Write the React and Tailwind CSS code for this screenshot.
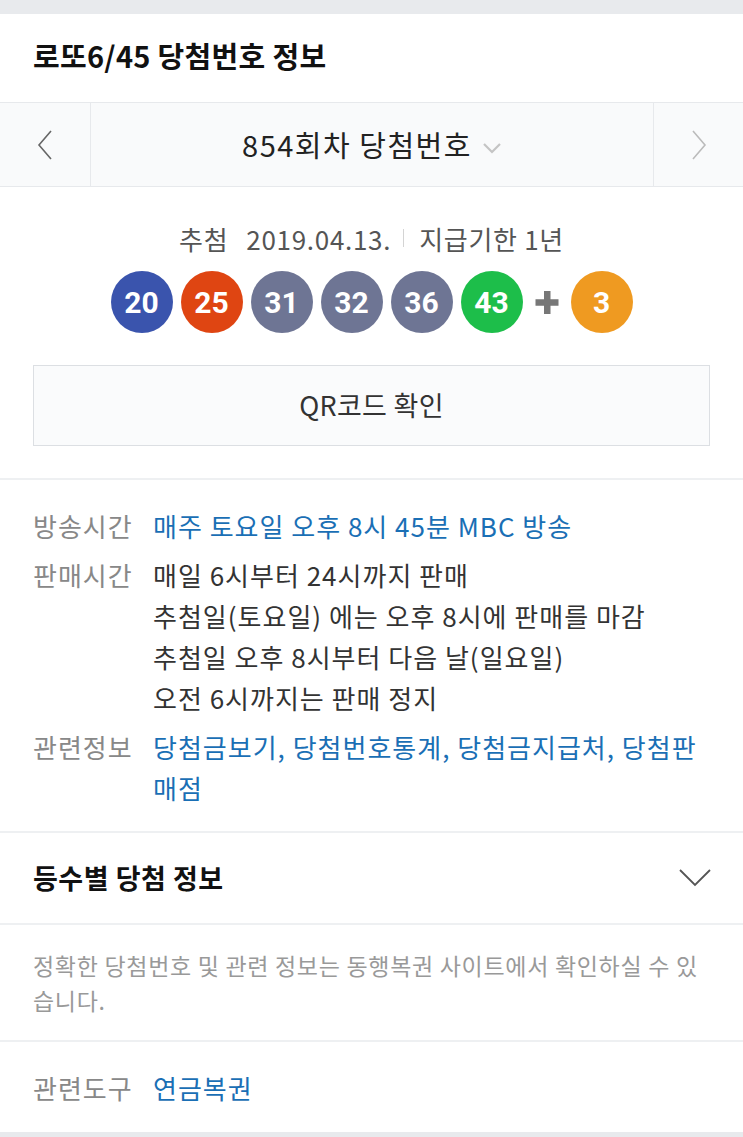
import React from "react";

const F = { fontFamily: '"Noto Sans CJK KR", "Noto Sans", sans-serif' };

function Ball({ n, color }) {
  return (
    <div
      className={`flex h-[62px] w-[62px] items-center justify-center rounded-full ${color} text-[30px] font-bold text-white`}
      style={{ fontFamily: 'Roboto, "Liberation Sans", sans-serif' }}
    >
      {n}
    </div>
  );
}

export default function App() {
  return (
    <div className="min-h-[1137px] w-[743px] bg-[#e8eaed]" style={F}>
      <div className="h-[14px]" />
      <div className="bg-white">
        {/* Title */}
        <div className="flex h-[88px] items-center px-[33px] pb-[4px]">
          <h1 className="text-[29px] font-bold tracking-[0.3px] text-[#111]">로또6/45 당첨번호 정보</h1>
        </div>
        {/* Nav */}
        <div className="flex h-[85px] border-y border-[#e7e9ec] bg-[#f9fafb]">
          <div className="flex w-[91px] items-center justify-center border-r border-[#e7e9ec]">
            <svg width="16" height="30" viewBox="0 0 16 30">
              <polyline points="14,1 2,15 14,29" fill="none" stroke="#666" strokeWidth="1.6" />
            </svg>
          </div>
          <div className="flex flex-1 items-center justify-center gap-[10px]">
            <span className="text-[29px] tracking-[1.5px] text-[#222]">854회차 당첨번호</span>
            <svg width="20" height="12" viewBox="0 0 20 12" className="mt-[6px]">
              <polyline points="2,2 10,10 18,2" fill="none" stroke="#c4c4c4" strokeWidth="2.2" />
            </svg>
          </div>
          <div className="flex w-[90px] items-center justify-center border-l border-[#e7e9ec]">
            <svg width="16" height="30" viewBox="0 0 16 30">
              <polyline points="2,1 14,15 2,29" fill="none" stroke="#bbb" strokeWidth="1.6" />
            </svg>
          </div>
        </div>
        {/* Draw info */}
        <div className="flex flex-col items-center border-b-2 border-[#eef0f2] px-[33px] pb-[32px] pt-[32px]">
          <div className="flex h-[38px] items-center text-[26px] tracking-[0.7px] text-[#555]">
            <span className="mr-[18px]">추첨</span>
            <span>2019.04.13.</span>
            <span className="ml-[12px] mr-[15px] h-[18px] w-px bg-[#d4d4d4]" />
            <span>지급기한 1년</span>
          </div>
          <div className="mt-[14px] flex items-center gap-[8px]">
            <Ball n="20" color="bg-[#3a54ad]" />
            <Ball n="25" color="bg-[#df4512]" />
            <Ball n="31" color="bg-[#6e7594]" />
            <Ball n="32" color="bg-[#6e7594]" />
            <Ball n="36" color="bg-[#6e7594]" />
            <Ball n="43" color="bg-[#1dbe4a]" />
            <svg width="30" height="30" viewBox="0 0 30 30" className="mx-[1px]">
              <rect x="12" y="4" width="6.5" height="23" fill="#777" />
              <rect x="3.5" y="12.25" width="23" height="6.5" fill="#777" />
            </svg>
            <Ball n="3" color="bg-[#ef9a21]" />
          </div>
          <div className="mt-[32px] flex h-[81px] w-full items-center justify-center border border-[#dcdfe3] bg-[#fafbfc] text-[27px] tracking-[0.3px] text-[#333]">
            QR코드 확인
          </div>
        </div>
        {/* Info */}
        <div className="flex flex-col gap-[8px] border-b-2 border-[#eef0f2] px-[33px] pb-[23px] pt-[25px] text-[26px] leading-[41px] tracking-[1px]">
          <div className="flex">
            <div className="w-[120px] shrink-0 text-[#888]">방송시간</div>
            <div className="text-[#1a6fb5]">매주 토요일 오후 8시 45분 MBC 방송</div>
          </div>
          <div className="flex">
            <div className="w-[120px] shrink-0 text-[#888]">판매시간</div>
            <div className="text-[#333]">
              매일 6시부터 24시까지 판매
              <br />
              추첨일(토요일) 에는 오후 8시에 판매를 마감
              <br />
              추첨일 오후 8시부터 다음 날(일요일)
              <br />
              오전 6시까지는 판매 정지
            </div>
          </div>
          <div className="flex">
            <div className="w-[120px] shrink-0 text-[#888]">관련정보</div>
            <div className="text-[#1a6fb5]">
              당첨금보기, 당첨번호통계, 당첨금지급처, 당첨판
              <br />
              매점
            </div>
          </div>
        </div>
        {/* Accordion */}
        <div className="flex h-[92px] items-center justify-between border-b-2 border-[#eef0f2] pl-[33px] pr-[32px]">
          <span className="text-[27px] font-bold tracking-[0.5px] text-[#111]">등수별 당첨 정보</span>
          <svg width="32" height="18" viewBox="0 0 32 18">
            <polyline points="1,1 16,16 31,1" fill="none" stroke="#555" strokeWidth="1.8" />
          </svg>
        </div>
        {/* Notice */}
        <div className="border-b-2 border-[#eef0f2] px-[33px] pb-[22px] pt-[23px] text-[23px] leading-[35px] tracking-[0.7px] text-[#999]">
          정확한 당첨번호 및 관련 정보는 동행복권 사이트에서 확인하실 수 있
          <br />
          습니다.
        </div>
        {/* Tools */}
        <div className="flex h-[90px] items-center px-[33px] text-[26px] tracking-[1px]">
          <span className="w-[120px] text-[#888]">관련도구</span>
          <span className="text-[#1a6fb5]">연금복권</span>
        </div>
      </div>
    </div>
  );
}
